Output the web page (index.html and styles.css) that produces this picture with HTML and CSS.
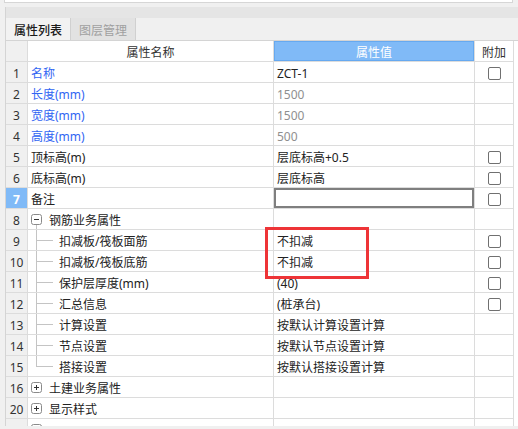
FILE: index.html
```html
<!DOCTYPE html>
<html lang="zh-CN">
<head>
<meta charset="utf-8">
<title>属性列表</title>
<link rel="stylesheet" href="styles.css">
</head>
<body>
<div class="top"></div>
<div class="panel">
  <div class="bar"></div>
  <div class="tabs">
    <div class="tab active">属性列表</div>
    <div class="tab">图层管理</div>
  </div>
  <div class="grid-wrap">
    <table class="props">
      <colgroup>
        <col class="c-num"><col class="c-name"><col class="c-val"><col class="c-ext">
      </colgroup>
      <thead>
        <tr>
          <th class="num"></th>
          <th class="name-h">属性名称</th>
          <th class="val-h">属性值</th>
          <th class="ext-h">附加</th>
        </tr>
      </thead>
      <tbody>
        <tr><td class="num">1</td><td class="name blue">名称</td><td class="val">ZCT-1</td><td class="ext"><span class="cb"></span></td></tr>
        <tr><td class="num">2</td><td class="name blue">长度(mm)</td><td class="val gray">1500</td><td class="ext"></td></tr>
        <tr><td class="num">3</td><td class="name blue">宽度(mm)</td><td class="val gray">1500</td><td class="ext"></td></tr>
        <tr><td class="num">4</td><td class="name blue">高度(mm)</td><td class="val gray">500</td><td class="ext"></td></tr>
        <tr><td class="num">5</td><td class="name">顶标高(m)</td><td class="val">层底标高+0.5</td><td class="ext"><span class="cb"></span></td></tr>
        <tr><td class="num">6</td><td class="name">底标高(m)</td><td class="val">层底标高</td><td class="ext"><span class="cb"></span></td></tr>
        <tr><td class="num sel">7</td><td class="name">备注</td><td class="val editing"></td><td class="ext"><span class="cb"></span></td></tr>
        <tr><td class="num">8</td><td class="name"><div class="node"><span class="exp-wrap open"><svg class="exp" width="11" height="11" viewBox="0 0 11 11"><rect x="0.5" y="0.5" width="10" height="10" rx="2" fill="#fff" stroke="#8a8a8a"/><path d="M3 5.5h5" stroke="#333"/></svg></span><span class="node-text">钢筋业务属性</span></div></td><td class="val"></td><td class="ext"></td></tr>
        <tr><td class="num">9</td><td class="name"><div class="node"><span class="branch"></span><span class="child-text">扣减板/筏板面筋</span></div></td><td class="val">不扣减</td><td class="ext"><span class="cb"></span></td></tr>
        <tr><td class="num">10</td><td class="name"><div class="node"><span class="branch"></span><span class="child-text">扣减板/筏板底筋</span></div></td><td class="val">不扣减</td><td class="ext"><span class="cb"></span></td></tr>
        <tr><td class="num">11</td><td class="name"><div class="node"><span class="branch"></span><span class="child-text">保护层厚度(mm)</span></div></td><td class="val">(40)</td><td class="ext"><span class="cb"></span></td></tr>
        <tr><td class="num">12</td><td class="name"><div class="node"><span class="branch"></span><span class="child-text">汇总信息</span></div></td><td class="val">(桩承台)</td><td class="ext"><span class="cb"></span></td></tr>
        <tr><td class="num">13</td><td class="name"><div class="node"><span class="branch"></span><span class="child-text">计算设置</span></div></td><td class="val">按默认计算设置计算</td><td class="ext"></td></tr>
        <tr><td class="num">14</td><td class="name"><div class="node"><span class="branch"></span><span class="child-text">节点设置</span></div></td><td class="val">按默认节点设置计算</td><td class="ext"></td></tr>
        <tr><td class="num">15</td><td class="name"><div class="node"><span class="branch last"></span><span class="child-text">搭接设置</span></div></td><td class="val">按默认搭接设置计算</td><td class="ext"></td></tr>
        <tr><td class="num">16</td><td class="name"><div class="node"><span class="exp-wrap"><svg class="exp" width="11" height="11" viewBox="0 0 11 11"><rect x="0.5" y="0.5" width="10" height="10" rx="2" fill="#fff" stroke="#8a8a8a"/><path d="M3 5.5h5M5.5 3v5" stroke="#333"/></svg></span><span class="node-text">土建业务属性</span></div></td><td class="val"></td><td class="ext"></td></tr>
        <tr><td class="num">20</td><td class="name"><div class="node"><span class="exp-wrap"><svg class="exp" width="11" height="11" viewBox="0 0 11 11"><rect x="0.5" y="0.5" width="10" height="10" rx="2" fill="#fff" stroke="#8a8a8a"/><path d="M3 5.5h5M5.5 3v5" stroke="#333"/></svg></span><span class="node-text">显示样式</span></div></td><td class="val"></td><td class="ext"></td></tr>
        <tr><td class="num"></td><td class="name"><div class="node"><span class="exp-wrap"><svg class="exp" width="11" height="11" viewBox="0 0 11 11"><rect x="0.5" y="0.5" width="10" height="10" rx="2" fill="#fff" stroke="#8a8a8a"/><path d="M3 5.5h5M5.5 3v5" stroke="#333"/></svg></span></div></td><td class="val"></td><td class="ext"></td></tr>
      </tbody>
    </table>
  </div>
</div>
<div class="mark"></div>
</body>
</html>
```

FILE: styles.css
```css
html, body {
  margin: 0;
  padding: 0;
}
body {
  width: 518px;
  height: 429px;
  overflow: hidden;
  background: #f0f0f0;
  font-family: "Noto Sans", "Noto Sans CJK SC", sans-serif;
  font-size: 12px;
  color: #222;
  position: relative;
}
.top {
  margin-left: 4px;
  width: 507px;
  height: 2px;
  background: #fff;
  border: 1px solid #d6d6d6;
  border-top: none;
  margin-bottom: 4px;
}
.panel {
  margin-left: 5px;
  border-left: 1px solid #d4d4d4;
}
.bar {
  height: 11px;
  background: #e5e5e5;
}
.tabs {
  display: flex;
  height: 22px;
  background: #f0f0f0;
  border-bottom: 1px solid #d4d4d4;
}
.tab {
  padding: 3px 8px 0;
  line-height: 19px;
  border-right: 1px solid #d0d0d0;
  background: #e2e2e2;
  color: #a0a0a0;
}
.tab.active {
  background: #f2f2f2;
  color: #1a1a1a;
  font-weight: 500;
}
.grid-wrap {
  height: 385px;
  overflow: hidden;
  background: #fff;
}
.props {
  table-layout: fixed;
  width: 508px;
  border-collapse: separate;
  border-spacing: 0;
}
.c-num { width: 22px; }
.c-name { width: 246px; }
.c-val { width: 201px; }
.c-ext { width: 39px; }
.props th, .props td {
  padding: 3px 0 0;
  height: 17px;
  line-height: 17px;
  border-right: 1px solid #dcdcdc;
  border-bottom: 1px solid #dcdcdc;
  white-space: nowrap;
  overflow: hidden;
  font-weight: normal;
  vertical-align: top;
}
.props th {
  text-align: center;
  color: #333;
}
.props .num {
  background: #f0f0f0;
  text-align: center;
  color: #333;
}
.props .num.sel {
  background: #80baf7;
  color: #fff;
  font-weight: bold;
}
.props .val-h {
  background: #80baf7;
  color: #fff;
  box-shadow: inset 0 0 0 1px #66a9f0;
}
.props .name {
  padding-left: 3px;
}
.props .val {
  padding-left: 3px;
}
.props .val.editing {
  box-shadow: inset 0 0 0 2px #7f7f7f;
}
.props .ext {
  text-align: center;
}
.blue {
  color: #3165f3;
}
.gray {
  color: #8f8f8f;
}
.cb {
  display: block;
  width: 13px;
  height: 13px;
  box-sizing: border-box;
  border: 1px solid #707070;
  border-radius: 2px;
  background: #fff;
  margin: 1.5px auto 0;
}
.node {
  display: flex;
  align-items: flex-start;
  height: 20px;
  margin-top: -3px;
}
.exp-wrap {
  width: 11px;
  height: 20px;
  display: flex;
  align-items: center;
  flex: none;
}
.exp-wrap.open {
  background: linear-gradient(#c4c4c4, #c4c4c4) 5px 16px / 1px 4px no-repeat;
}
.exp {
  display: block;
}
.node-text {
  margin-left: 7px;
  padding-top: 3px;
}
.branch {
  flex: none;
  width: 17px;
  height: 20px;
  margin-left: 5px;
  background:
    linear-gradient(#c4c4c4, #c4c4c4) 0 0 / 1px 100% no-repeat,
    linear-gradient(#c4c4c4, #c4c4c4) 0 10px / 17px 1px no-repeat;
}
.branch.last {
  background:
    linear-gradient(#c4c4c4, #c4c4c4) 0 0 / 1px 11px no-repeat,
    linear-gradient(#c4c4c4, #c4c4c4) 0 10px / 17px 1px no-repeat;
}
.child-text {
  margin-left: 6px;
  padding-top: 3px;
}
.mark {
  position: absolute;
  left: 265px;
  top: 227px;
  width: 104px;
  height: 52px;
  box-sizing: border-box;
  border: 3px solid #ee3437;
}
```
